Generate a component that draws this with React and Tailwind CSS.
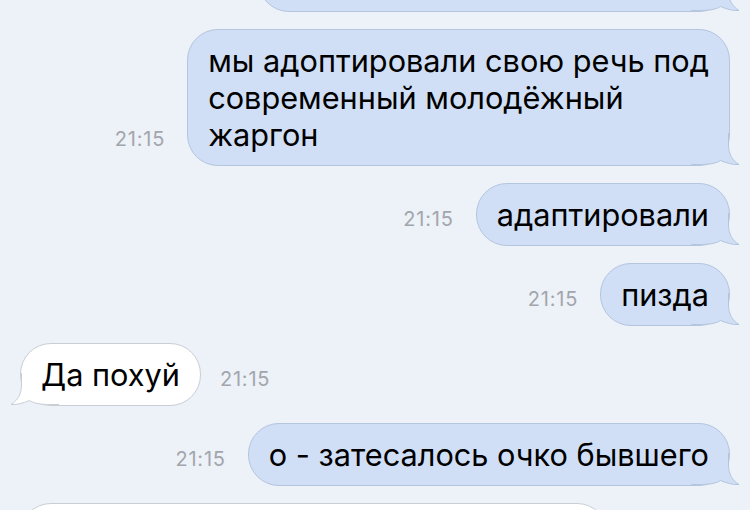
import React from 'react';

const OUT_FILL = '#d0dff5';
const OUT_LINE = '#b4c5de';
const IN_FILL = '#ffffff';
const IN_LINE = '#c9ced6';

// tail drawn over the corner; svg box 50x40, bubble edge sits at x=38 / y=40
function Tail({ side }) {
  const fill = side === 'out' ? OUT_FILL : IN_FILL;
  const line = side === 'out' ? OUT_LINE : IN_LINE;
  const outline =
    'M37.5 8 L37.5 20 C37.5 29 41 35 48 39.5 C43 39.8 36 38.5 29.5 35.5 C25 38.5 18 39.5 8 39.5 L0 39.5';
  const area = outline + ' L0 8 Z';
  return (
    <svg
      width="50"
      height="40"
      viewBox="0 0 50 40"
      className={
        side === 'out'
          ? 'absolute right-[-12px] bottom-0'
          : 'absolute left-[-12px] bottom-0 -scale-x-100'
      }
    >
      <path d={area} fill={fill} />
      <path d={outline} fill="none" stroke={line} strokeWidth="1" />
    </svg>
  );
}

function Time() {
  return (
    <span className="text-[20px] leading-none text-[#a2a6ac] tracking-[0.8px] mb-[17px] shrink-0">
      21:15
    </span>
  );
}

function Out({ children }) {
  return (
    <div className="flex justify-end items-end gap-[22px]">
      <Time />
      <div className="relative rounded-[31px] bg-[#d0dff5] border border-[#b4c5de] px-[20px] py-[12px]">
        <Tail side="out" />
        <div className="relative text-[30.7px] leading-[37px] text-black">
          {children}
        </div>
      </div>
    </div>
  );
}

function In({ children }) {
  return (
    <div className="flex justify-start items-end gap-[19px]">
      <div className="relative rounded-[31px] bg-white border border-[#c9ced6] px-[20px] py-[12px]">
        <Tail side="in" />
        <div className="relative text-[30.7px] leading-[37px] text-black">
          {children}
        </div>
      </div>
      <Time />
    </div>
  );
}

export default function App() {
  return (
    <div
      className="w-[750px] h-[510px] overflow-hidden bg-[#edf1f8]"
      style={{ fontFamily: 'Inter, "Noto Sans", sans-serif' }}
    >
      <div className="flex flex-col gap-[17px] px-[20px]">
        <div className="flex justify-end -mt-[88px]">
          <div className="relative w-[472px] h-[100px] rounded-[31px] bg-[#d0dff5] border border-[#b4c5de]">
            <Tail side="out" />
          </div>
        </div>

        <Out>
          мы адоптировали свою речь под
          <br />
          современный молодёжный
          <br />
          жаргон
        </Out>

        <Out>адаптировали</Out>
        <Out>пизда</Out>
        <In>Да похуй</In>
        <Out>о - затесалось очко бывшего</Out>

        <div className="flex justify-start">
          <div className="relative w-[588px] h-[80px] rounded-[31px] bg-white border border-[#c9ced6]" />
        </div>
      </div>
    </div>
  );
}
